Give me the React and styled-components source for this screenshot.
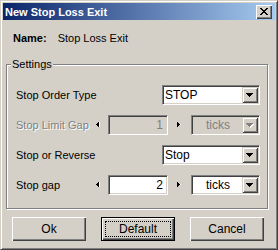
import React from "react";
import styled, { createGlobalStyle, css } from "styled-components";

const GlobalStyle = createGlobalStyle`
  html, body { margin: 0; padding: 0; background: #d4d0c8; }
  * { box-sizing: border-box; }
`;

const Window = styled.div`
  width: 278px;
  height: 250px;
  border: 1px solid;
  border-color: #d4d0c8 #404040 #404040 #d4d0c8;
  box-shadow: inset 1px 1px #ffffff, inset -1px -1px #808080;
  padding: 2px;
  background: #d4d0c8;
  display: flex;
  flex-direction: column;
  font-family: "Liberation Sans", Arial, sans-serif;
  color: #000;
`;

const TitleBar = styled.div`
  height: 17px;
  flex: none;
  display: flex;
  align-items: center;
  justify-content: space-between;
  padding: 0 3px 0 2px;
  background: linear-gradient(to right, #0a246a, #a6caf0);
  color: #fff;
  font-weight: bold;
  font-size: 11px;
`;

const CloseButton = styled.div`
  width: 16px;
  height: 14px;
  background: #d4d0c8;
  box-shadow: inset 1px 1px #ffffff, inset -1px -1px #404040, inset -2px -2px #808080;
  display: flex;
  align-items: center;
  justify-content: center;
  padding: 0 1px 1px 0;
`;

const Body = styled.div`
  flex: 1;
  display: flex;
  flex-direction: column;
  padding: 0 7px 0 3px;
`;

const NameRow = styled.div`
  margin-top: 11px;
  padding-left: 7px;
  display: flex;
  gap: 11px;
  font-size: 11px;
  line-height: 14px;
`;

const NameLabel = styled.span`
  font-weight: bold;
`;

const GroupBox = styled.div`
  position: relative;
  margin-top: 19px;
  border: 1px solid #808080;
  box-shadow: inset 1px 1px #ffffff, 1px 1px #ffffff;
  padding: 20px 7px 13px 9px;
  display: flex;
  flex-direction: column;
  gap: 10px;
`;

const Legend = styled.span`
  position: absolute;
  top: -8px;
  left: 4px;
  padding: 0 1px;
  background: #d4d0c8;
  font-size: 11px;
  line-height: 14px;
`;

const Row = styled.div`
  display: flex;
  align-items: center;
  height: 20px;
`;

const Label = styled.span`
  flex: 1;
  font-size: 11px;
  ${(p) =>
    p.$disabled &&
    css`
      color: #808080;
      text-shadow: 1px 1px #ffffff;
    `}
`;

const sunken = css`
  border: 1px solid;
  border-color: #808080 #ffffff #ffffff #808080;
  box-shadow: inset 1px 1px #404040, inset -1px -1px #d4d0c8;
`;

const ComboBox = styled.div`
  ${sunken};
  width: ${(p) => p.$width}px;
  height: 20px;
  padding: 1px;
  display: flex;
  background: ${(p) => (p.$disabled ? "#d4d0c8" : "#ffffff")};
`;

const ComboText = styled.span`
  flex: 1;
  font-size: 12px;
  line-height: 16px;
  padding-left: 1px;
  text-align: ${(p) => (p.$center ? "center" : "left")};
  color: ${(p) => (p.$disabled ? "#808080" : "#000")};
`;

const ArrowButton = styled.div`
  width: 16px;
  height: 16px;
  background: #d4d0c8;
  box-shadow: inset 1px 1px #d4d0c8, inset -1px -1px #404040, inset 2px 2px #ffffff,
    inset -2px -2px #808080;
  display: flex;
  align-items: center;
  justify-content: center;
  padding: 1px 1px 0 0;
`;

const EditBox = styled.div`
  ${sunken};
  width: 60px;
  height: 20px;
  padding: 0 4px 0 2px;
  text-align: right;
  font-size: 12px;
  line-height: 18px;
  background: ${(p) => (p.$disabled ? "#d4d0c8" : "#ffffff")};
  color: ${(p) => (p.$disabled ? "#808080" : "#000")};
`;

const Spin = styled.div`
  width: 12px;
  height: 20px;
  display: flex;
  align-items: center;
  justify-content: center;
  margin-right: ${(p) => p.$mr}px;
`;

const ButtonRow = styled.div`
  margin-top: 8px;
  padding-left: 6px;
  display: flex;
  gap: 15px;
`;

const Button = styled.div`
  position: relative;
  width: 74px;
  height: 24px;
  display: flex;
  align-items: center;
  justify-content: center;
  font-size: 12px;
  background: #d4d0c8;
  box-shadow: inset 1px 1px #ffffff, inset -1px -1px #404040, inset -2px -2px #808080;
  ${(p) =>
    p.$default &&
    css`
      border: 1px solid #000;
      &::after {
        content: "";
        position: absolute;
        inset: 3px;
        border: 1px dotted #000;
      }
    `}
`;

const CloseGlyph = () => (
  <svg width="8" height="7" viewBox="0 0 8 7" shapeRendering="crispEdges">
    <g fill="#000">
      <rect x="0" y="0" width="2" height="1" />
      <rect x="6" y="0" width="2" height="1" />
      <rect x="1" y="1" width="2" height="1" />
      <rect x="5" y="1" width="2" height="1" />
      <rect x="2" y="2" width="4" height="1" />
      <rect x="3" y="3" width="2" height="1" />
      <rect x="2" y="4" width="4" height="1" />
      <rect x="1" y="5" width="2" height="1" />
      <rect x="5" y="5" width="2" height="1" />
      <rect x="0" y="6" width="2" height="1" />
      <rect x="6" y="6" width="2" height="1" />
    </g>
  </svg>
);

const DownGlyph = ({ disabled }) => {
  const tri = (dx, dy, fill) => (
    <g fill={fill} transform={`translate(${dx} ${dy})`}>
      <rect x="0" y="0" width="7" height="1" />
      <rect x="1" y="1" width="5" height="1" />
      <rect x="2" y="2" width="3" height="1" />
      <rect x="3" y="3" width="1" height="1" />
    </g>
  );
  return (
    <svg width="8" height="5" viewBox="0 0 8 5" shapeRendering="crispEdges">
      {disabled && tri(1, 1, "#ffffff")}
      {tri(0, 0, disabled ? "#808080" : "#000")}
    </svg>
  );
};

const SideGlyph = ({ dir }) => (
  <svg width="5" height="6" viewBox="0 0 5 6" shapeRendering="crispEdges">
    {dir === "left" ? (
      <g>
        <rect x="3" y="0" width="1" height="5" fill="#ffffff" />
        <rect x="0" y="2" width="1" height="1" fill="#000" />
        <rect x="1" y="1" width="1" height="3" fill="#000" />
        <rect x="2" y="0" width="1" height="5" fill="#000" />
      </g>
    ) : (
      <g>
        <rect x="3" y="2" width="1" height="1" fill="#ffffff" />
        <rect x="1" y="0" width="1" height="5" fill="#000" />
        <rect x="2" y="1" width="1" height="3" fill="#000" />
        <rect x="3" y="2" width="1" height="1" fill="#000" />
        <rect x="4" y="2" width="1" height="1" fill="#ffffff" />
      </g>
    )}
  </svg>
);

const Combo = ({ width, value, disabled, center }) => (
  <ComboBox $width={width} $disabled={disabled}>
    <ComboText $center={center} $disabled={disabled}>
      {value}
    </ComboText>
    <ArrowButton>
      <DownGlyph disabled={disabled} />
    </ArrowButton>
  </ComboBox>
);

const SpinRow = ({ label, value, unit, disabled }) => (
  <Row>
    <Label $disabled={disabled}>{label}</Label>
    <Spin $mr={4}>
      <SideGlyph dir="left" />
    </Spin>
    <EditBox $disabled={disabled}>{value}</EditBox>
    <Spin $mr={7} style={{ marginLeft: 4 }}>
      <SideGlyph dir="right" />
    </Spin>
    <Combo width={69} value={unit} disabled={disabled} center />
  </Row>
);

export default function App() {
  return (
    <>
      <GlobalStyle />
      <Window>
        <TitleBar>
          <span>New Stop Loss Exit</span>
          <CloseButton>
            <CloseGlyph />
          </CloseButton>
        </TitleBar>
        <Body>
          <NameRow>
            <NameLabel>Name:</NameLabel>
            <span>Stop Loss Exit</span>
          </NameRow>
          <GroupBox>
            <Legend>Settings</Legend>
            <Row>
              <Label>Stop Order Type</Label>
              <Combo width={98} value="STOP" />
            </Row>
            <SpinRow label="Stop Limit Gap" value="1" unit="ticks" disabled />
            <Row>
              <Label>Stop or Reverse</Label>
              <Combo width={98} value="Stop" />
            </Row>
            <SpinRow label="Stop gap" value="2" unit="ticks" />
          </GroupBox>
          <ButtonRow>
            <Button>Ok</Button>
            <Button $default>Default</Button>
            <Button>Cancel</Button>
          </ButtonRow>
        </Body>
      </Window>
    </>
  );
}
